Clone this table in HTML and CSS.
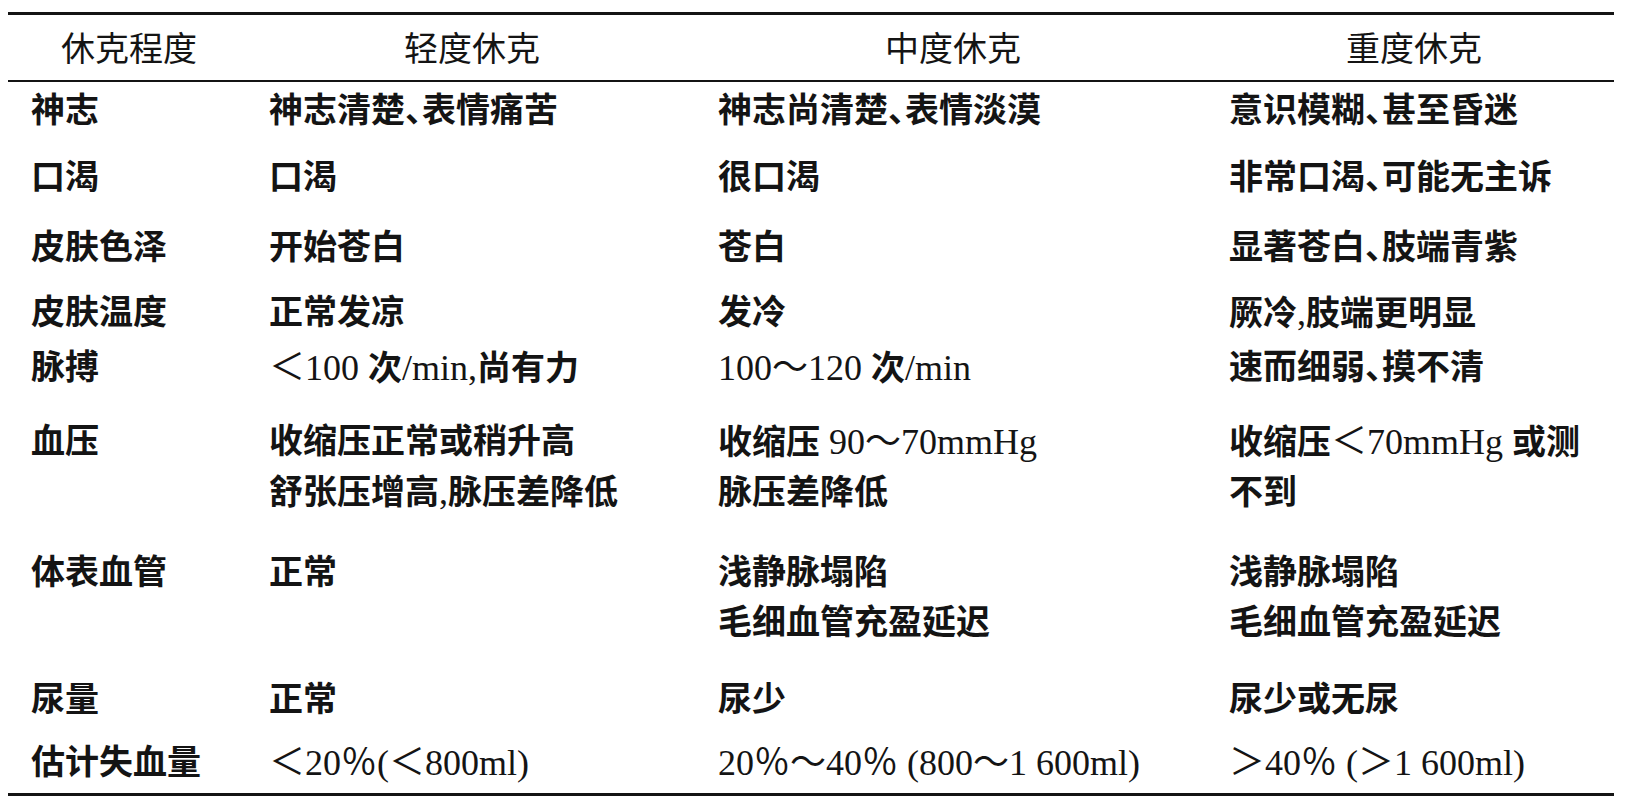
FILE: index.html
```html
<!DOCTYPE html>
<html lang="zh-CN">
<head>
<meta charset="utf-8">
<title>休克程度</title>
<link rel="stylesheet" href="styles.css">
</head>
<body>
<div class="table">
  <div class="thead">
    <div class="th th1">休克程度</div>
    <div class="th th2">轻度休克</div>
    <div class="th th3">中度休克</div>
    <div class="th th4">重度休克</div>
  </div>
  <div class="tbody">
    <div class="td first">神志</div>
    <div class="td">神志清楚、表情痛苦</div>
    <div class="td">神志尚清楚、表情淡漠</div>
    <div class="td">意识模糊、甚至昏迷</div>

    <div class="td first">口渴</div>
    <div class="td">口渴</div>
    <div class="td">很口渴</div>
    <div class="td">非常口渴、可能无主诉</div>

    <div class="td first">皮肤色泽</div>
    <div class="td">开始苍白</div>
    <div class="td">苍白</div>
    <div class="td">显著苍白、肢端青紫</div>

    <div class="td first">皮肤温度</div>
    <div class="td">正常发凉</div>
    <div class="td">发冷</div>
    <div class="td">厥冷<span class="n">,</span>肢端更明显</div>

    <div class="td first">脉搏</div>
    <div class="td"><span class="n">＜100 </span>次<span class="n">/min,</span>尚有力</div>
    <div class="td"><span class="n">100～120 </span>次<span class="n">/min</span></div>
    <div class="td">速而细弱、摸不清</div>

    <div class="td first">血压</div>
    <div class="td">收缩压正常或稍升高<br>舒张压增高<span class="n">,</span>脉压差降低</div>
    <div class="td">收缩压<span class="n"> 90～70mmHg</span><br>脉压差降低</div>
    <div class="td">收缩压<span class="n">＜70mmHg </span>或测<br>不到</div>

    <div class="td first">体表血管</div>
    <div class="td">正常</div>
    <div class="td">浅静脉塌陷<br>毛细血管充盈延迟</div>
    <div class="td">浅静脉塌陷<br>毛细血管充盈延迟</div>

    <div class="td first">尿量</div>
    <div class="td">正常</div>
    <div class="td">尿少</div>
    <div class="td">尿少或无尿</div>

    <div class="td first">估计失血量</div>
    <div class="td"><span class="n">＜20％(＜800ml)</span></div>
    <div class="td"><span class="n">20％～40％ (800～1 600ml)</span></div>
    <div class="td"><span class="n">＞40％ (＞1 600ml)</span></div>
  </div>
</div>
</body>
</html>
```

FILE: styles.css
```css
html, body {
  margin: 0;
  padding: 0;
  background: #ffffff;
}

body {
  color: #141414;
  font-family: "Liberation Serif", "Noto Sans CJK SC", serif;
  font-size: 34px;
}

.table {
  width: 1606px;
  margin: 12px 0 0 8px;
  border-top: 3px solid #141414;
  border-bottom: 3px solid #141414;
}

.thead {
  display: grid;
  grid-template-columns: 261px 449px 511px 1fr;
  padding: 7px 0 8px;
  border-bottom: 2px solid #141414;
  line-height: 50px;
}

.th {
  font-family: "Noto Sans CJK SC", sans-serif;
  font-weight: 400;
  white-space: nowrap;
}

.th1 { padding-left: 53px; }
.th2 { padding-left: 135px; }
.th3 { padding-left: 167px; }
.th4 { padding-left: 117px; }

.tbody {
  display: grid;
  grid-template-columns: 261px 449px 511px 1fr;
  grid-template-rows: 67px 70px 65px 55px 74px 131px 127px 63px 55px;
  padding-top: 4px;
}

.td {
  line-height: 50px;
  white-space: nowrap;
  font-weight: 700;
  font-feature-settings: "halt";
}

.td.first {
  padding-left: 23px;
}

.n {
  font-size: 36px;
  font-weight: 400;
  font-family: "Liberation Serif", "Noto Sans CJK SC", serif;
}
```
